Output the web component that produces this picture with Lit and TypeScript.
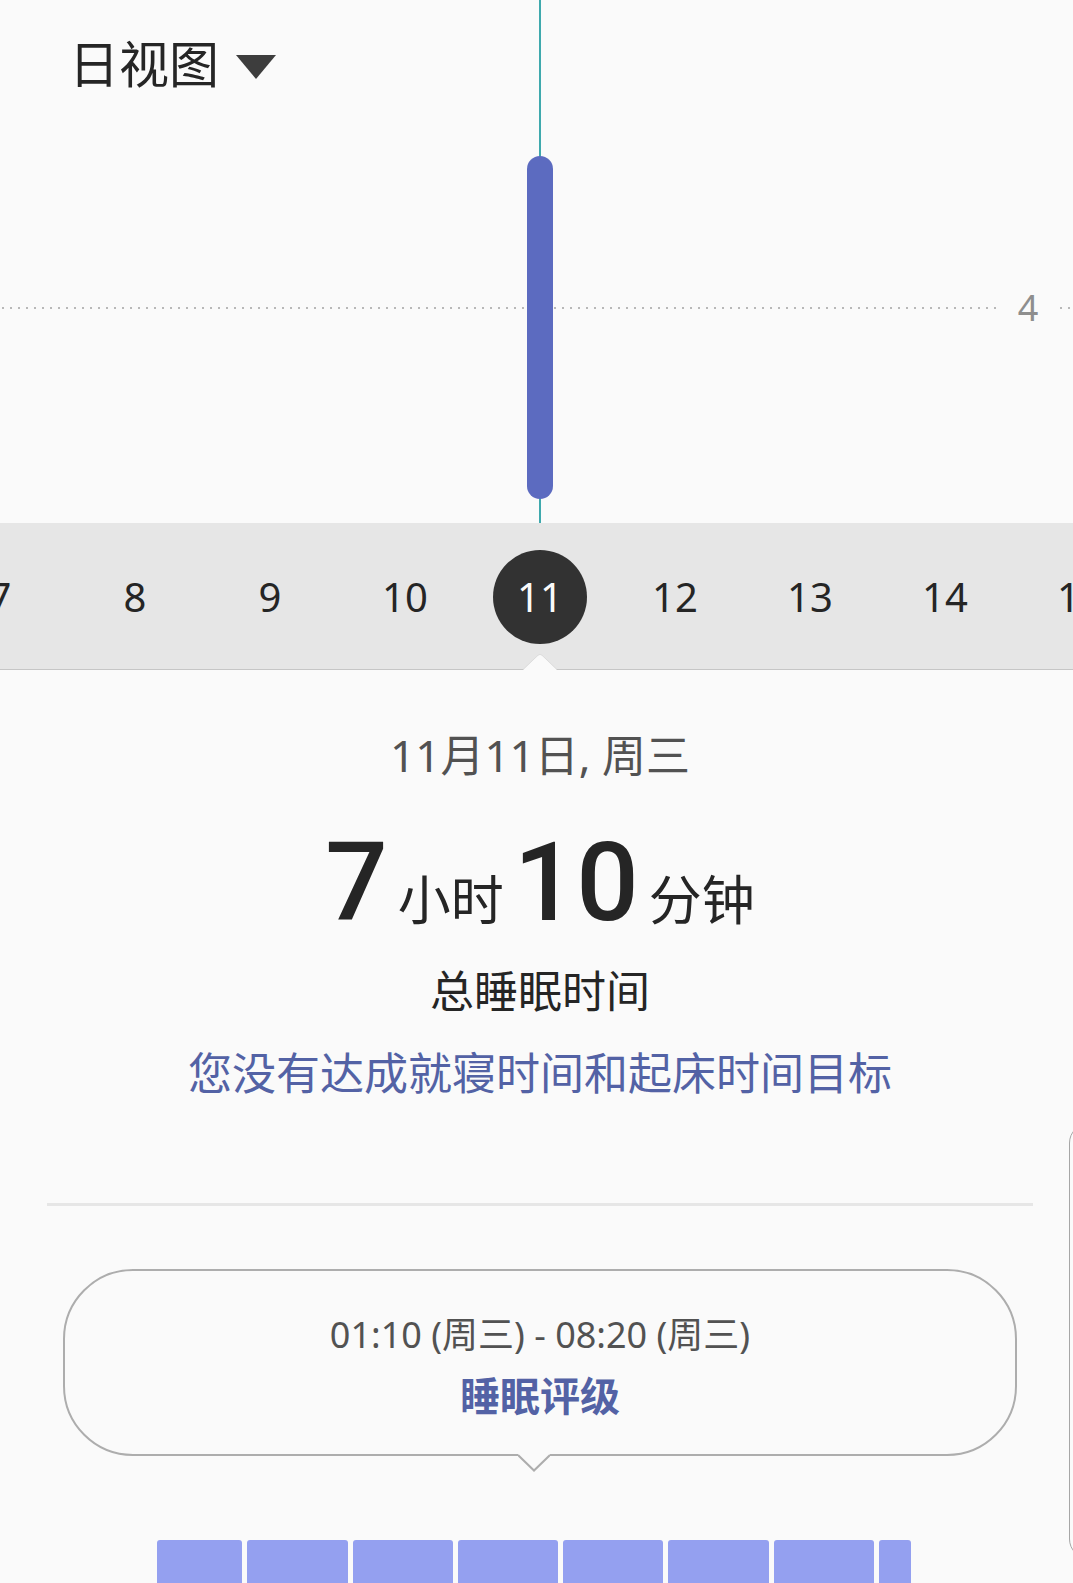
import { LitElement, html, css } from "lit";
import { customElement, property, state } from "lit/decorators.js";
import { classMap } from "lit/directives/class-map.js";
import { styleMap } from "lit/directives/style-map.js";

const FONT = css`"Noto Sans", "Noto Sans CJK SC", sans-serif`;

@customElement("sleep-trend")
class SleepTrend extends LitElement {
  static styles = css`
    :host {
      display: block;
      font-family: ${FONT};
    }
    .trend {
      position: relative;
      height: 523px;
      display: flex;
      flex-direction: column;
    }
    .picker {
      display: flex;
      align-items: center;
      gap: 17px;
      height: 128px;
      padding-left: 69px;
    }
    .view {
      appearance: none;
      border: 0;
      padding: 0;
      margin: 0;
      background: transparent;
      color: #252525;
      font: 400 50px/72px ${FONT};
    }
    .caret {
      width: 40px;
      height: 24px;
      margin-top: 6px;
      pointer-events: none;
    }
    .axis {
      display: flex;
      align-items: center;
      margin-top: 153px;
      height: 54px;
    }
    .dots {
      height: 2px;
      background: repeating-linear-gradient(
        to right,
        transparent 0 2px,
        #b8b8b8 2px 4px,
        transparent 4px 8px
      );
    }
    .dots.long {
      flex: 1;
    }
    .dots.short {
      width: 15px;
    }
    .tick {
      width: 60px;
      text-align: center;
      color: #8e8e8e;
      font-size: 36px;
      line-height: 54px;
    }
    .cursor {
      position: absolute;
      inset: 0 0 0 7px;
      display: flex;
      justify-content: center;
      pointer-events: none;
    }
    .line {
      width: 2px;
      margin-left: -1px;
      background: #3fa9ad;
    }
    .bar {
      position: absolute;
      top: 156px;
      bottom: 24px;
      width: 26px;
      border-radius: 13px;
      background: #5c6bc0;
    }
  `;

  render() {
    return html`
      <section class="trend">
        <div class="picker">
          <select class="view" aria-label="日视图">
            <option>日视图</option>
          </select>
          <svg class="caret" viewBox="0 0 40 24" aria-hidden="true">
            <path d="M0 0H40L20 24Z" fill="#3d3d3d" />
          </svg>
        </div>
        <div class="axis">
          <span class="dots long"></span>
          <span class="tick">4</span>
          <span class="dots short"></span>
        </div>
        <div class="cursor">
          <span class="line"></span>
          <span class="bar"></span>
        </div>
      </section>
    `;
  }
}

@customElement("day-strip")
class DayStrip extends LitElement {
  @property({ type: Number }) selected = 11;

  static styles = css`
    :host {
      display: block;
      font-family: ${FONT};
    }
    .strip {
      display: flex;
      justify-content: center;
      align-items: center;
      box-sizing: border-box;
      height: 147px;
      padding: 2px 0 0 7px;
      overflow: hidden;
      background: #e6e6e6;
      border-bottom: 1px solid #c6c6c6;
    }
    .cell {
      flex: 0 0 135px;
      display: flex;
      justify-content: center;
    }
    .day {
      width: 94px;
      height: 94px;
      padding: 0;
      border: 0;
      border-radius: 50%;
      background: transparent;
      color: #252525;
      font: 400 40px/94px ${FONT};
    }
    .day.on {
      background: #323232;
      color: #fafafa;
    }
    .wrap {
      position: relative;
    }
    .notch {
      position: absolute;
      left: 7px;
      right: 0;
      bottom: 0;
      display: flex;
      justify-content: center;
      pointer-events: none;
    }
    .notch svg {
      width: 34px;
      height: 16px;
    }
  `;

  render() {
    const days = Array.from({ length: 9 }, (_, i) => i + 7);
    return html`
      <div class="wrap">
        <nav class="strip">
          ${days.map(
            (d) => html`<span class="cell">
              <button
                class=${classMap({ day: true, on: d === this.selected })}
                @click=${() => (this.selected = d)}
              >${d}</button>
            </span>`
          )}
        </nav>
        <div class="notch">
          <svg viewBox="0 0 34 16" aria-hidden="true">
            <path d="M0 16L15 1.6Q17 0 19 1.6L34 16Z" fill="#fafafa" />
            <path d="M0 15.5L15 1.2Q17 -0.4 19 1.2L34 15.5" fill="none" stroke="#dcdcdc" stroke-width="1" />
          </svg>
        </div>
      </div>
    `;
  }
}

@customElement("sleep-stages")
class SleepStages extends LitElement {
  @property({ attribute: false }) segments: number[] = [];

  static styles = css`
    :host {
      display: flex;
    }
    .row {
      flex: 1;
      display: flex;
      gap: 5px;
      padding: 0 162px 0 157px;
    }
    .seg {
      flex-basis: 0;
      border-radius: 3px 3px 0 0;
      background: #94a0f0;
    }
  `;

  render() {
    return html`<div class="row">
      ${this.segments.map(
        (n) => html`<span class="seg" style=${styleMap({ flexGrow: String(n) })}></span>`
      )}
    </div>`;
  }
}

@customElement("app-root")
class AppRoot extends LitElement {
  @state() private segments = [85, 100, 100, 100, 100, 100, 100, 32];

  static styles = css`
    :host {
      display: block;
      font-family: ${FONT};
      color: #252525;
      background: #fafafa;
    }
    .page {
      position: relative;
      display: flex;
      flex-direction: column;
      min-height: 100vh;
      overflow: hidden;
    }
    .summary {
      display: flex;
      flex-direction: column;
      align-items: center;
      padding: 53px 0 0 7px;
      text-align: center;
    }
    p,
    h1,
    h2 {
      margin: 0;
      font-weight: 400;
    }
    .date {
      color: #525252;
      font-size: 44px;
      line-height: 64px;
    }
    .total {
      display: flex;
      align-items: baseline;
      gap: 10px;
      height: 156px;
      margin-top: 16px;
      line-height: 160px;
      font-size: 53px;
    }
    .num {
      font-family: Roboto, "Noto Sans", sans-serif;
      font-size: 110px;
      font-weight: 500;
    }
    .caption {
      font-size: 44px;
      line-height: 64px;
    }
    .goal {
      margin-top: 18px;
      color: #5362a5;
      font-size: 44px;
      line-height: 64px;
    }
    .rule {
      height: 3px;
      margin: 98px 40px 0 47px;
      border: 0;
      background: #e6e6e6;
    }
    .bubble {
      position: relative;
      display: flex;
      flex-direction: column;
      align-items: center;
      margin: 63px 56px 0 63px;
      padding: 36px 0 26px;
      border: 2px solid #adadad;
      border-radius: 70px;
    }
    .period {
      color: #525252;
      font-size: 36px;
      line-height: 56px;
    }
    .rating {
      color: #5362a5;
      font-size: 40px;
      font-weight: 700;
      line-height: 65px;
      text-decoration: none;
    }
    .tail {
      position: absolute;
      top: 100%;
      left: calc(50% - 22px);
      width: 32px;
      height: 18px;
    }
    .stages {
      flex: 1;
      min-height: 40px;
      margin-top: 84px;
    }
    .drawer {
      position: absolute;
      top: 1123px;
      left: calc(100% - 4px);
      width: 60px;
      height: 434px;
      border: 1px solid #a6a6a6;
      border-radius: 20px;
    }
  `;

  render() {
    return html`
      <main class="page">
        <sleep-trend></sleep-trend>
        <day-strip .selected=${11}></day-strip>
        <section class="summary">
          <p class="date">11月11日, 周三</p>
          <h1 class="total">
            <span class="num">7</span><span>小时</span>
            <span class="num">10</span><span>分钟</span>
          </h1>
          <h2 class="caption">总睡眠时间</h2>
          <p class="goal">您没有达成就寝时间和起床时间目标</p>
        </section>
        <hr class="rule" />
        <section class="bubble">
          <p class="period">01:10 (周三) - 08:20 (周三)</p>
          <a class="rating" href="#">睡眠评级</a>
          <svg class="tail" viewBox="0 0 32 18" aria-hidden="true">
            <path d="M0 0H32V2H32L16 17L0 2Z" fill="#fafafa" />
            <path d="M0 1L16 16.5L32 1" fill="none" stroke="#adadad" stroke-width="2" />
          </svg>
        </section>
        <sleep-stages class="stages" .segments=${this.segments}></sleep-stages>
        <div class="drawer"></div>
      </main>
    `;
  }
}
